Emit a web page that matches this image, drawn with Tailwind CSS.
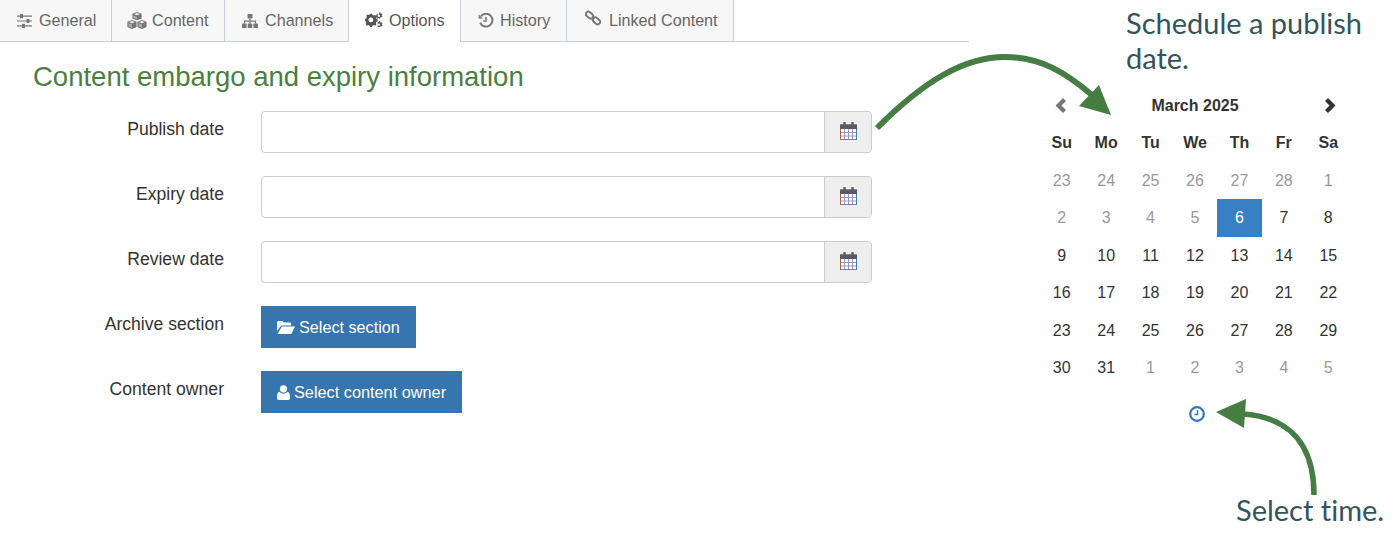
<!DOCTYPE html>
<html lang="en">
<head>
<meta charset="UTF-8">
<title>Content embargo and expiry information</title>
<script src="https://cdn.jsdelivr.net/npm/@tailwindcss/browser@4"></script>
</head>
<body class="bg-white font-['Liberation_Sans',sans-serif] text-[16px] text-[#333]">
<div class="relative flex w-[1400px] h-[550px] overflow-hidden">

  <!-- left: tabs and form -->
  <div class="w-[969px] shrink-0">
    <div class="flex h-[42px] border-b border-[#c5d0de] text-[16.15px] text-[#666]">
      <div class="flex items-center gap-[7px] w-[112px] pl-[17px] bg-[#f7f7f7] border-r border-[#c5d0de]">
        <svg class="w-[15px] h-[14px]" viewBox="0 0 15 14" fill="#777"><path d="M0 1.5h15v1.2H0zM0 6.4h15v1.2H0zM0 11.3h15v1.2H0z"/><rect x="3" y="0" width="3" height="4.2" rx=".5"/><rect x="9.5" y="4.9" width="3" height="4.2" rx=".5"/><rect x="5" y="9.8" width="3" height="4.2" rx=".5"/></svg>
        <span>General</span>
      </div>
      <div class="flex items-center gap-[5px] w-[113px] pl-[15px] bg-[#f7f7f7] border-r border-[#c5d0de]">
        <svg class="w-[20px] h-[17px]" viewBox="0 0 20 17" fill="#777"><path d="M10 0l4.6 1.8v4.6L10 8.2 5.4 6.4V1.8z"/><path d="M5 8l4.6 1.8v5.2L5 17 .4 15V9.8z"/><path d="M15 8l4.6 1.8v5.2L15 17l-4.6-2V9.8z"/><path d="M10 1l3 1.1-3 1.2-3-1.2zM5 9l3 1.1-3 1.2-3-1.2zM15 9l3 1.1-3 1.2-3-1.2z" fill="#f7f7f7"/><path d="M6.4 3.6L10 5v2.3L6.4 6zM1.4 11.1L5 12.5v3.2l-3.6-1.4zM11.4 11.1l3.6 1.4v3.2l-3.6-1.4z" fill="#aaa"/></svg>
        <span>Content</span>
      </div>
      <div class="flex items-center gap-[7px] w-[124px] pl-[17px] bg-[#f7f7f7] border-r border-[#c5d0de]">
        <svg class="w-[16px] h-[14px]" viewBox="0 0 16 14" fill="#777"><rect x="5.5" y="0" width="5" height="4.5" rx=".5"/><rect x="0" y="9.5" width="4.6" height="4.5" rx=".5"/><rect x="5.7" y="9.5" width="4.6" height="4.5" rx=".5"/><rect x="11.4" y="9.5" width="4.6" height="4.5" rx=".5"/><path d="M7.4 4.5h1.2v2h5.5v3h-1.2V7.7H8.6v1.8H7.4V7.7H3.1v1.8H1.9v-3h5.5z"/></svg>
        <span>Channels</span>
      </div>
      <div class="flex items-start gap-[6px] w-[112px] h-[42px] pl-[16px] pt-[8px] bg-white border-r border-[#c5d0de] text-[#555]">
        <svg class="w-[18px] h-[15px] mt-[4px]" viewBox="0 0 18 15" fill="#555"><path fill-rule="evenodd" d="M5.2 2.6l1.7-.5.6 1.3 1.4.6 1.3-.6 1.2 1.3-.6 1.3.6 1.4 1.3.5v1.8l-1.3.5-.6 1.4.6 1.3-1.2 1.3-1.3-.6-1.4.6-.6 1.3-1.7-.0-.6-1.3-1.4-.6-1.3.6L.7 12.5l.6-1.3-.6-1.4L0 9.3V7.5l1.3-.5.6-1.4-.6-1.3 1.2-1.3 1.3.6zM5.9 6a2.4 2.4 0 100 4.8 2.4 2.4 0 000-4.8z" transform="translate(0 -.5)"/><path fill-rule="evenodd" d="M14.5 0l.8.3v1l.8.5.9-.4.6.8-.7.7v.9l.7.7-.6.8-.9-.4-.8.5v1l-.8.3-.6-.8h-.9l-.6.8-.8-.3v-1l-.8-.5-.4-.1V4.1l.4-.3.8-.5v-1l.8-.3.6.8h.9zM13.9 2.6a1.2 1.2 0 100 2.4 1.2 1.2 0 000-2.4z"/><path fill-rule="evenodd" d="M14.5 9l.8.3v1l.8.5.9-.4.6.8-.7.7v.9l.7.7-.6.8-.9-.4-.8.5v1l-.8.3-.6-.8h-.9l-.6-.8.4-1.5-.4-1.5.6-1.2h.9zM13.9 11.4a1.2 1.2 0 100 2.4 1.2 1.2 0 000-2.4z"/></svg>
        <span>Options</span>
      </div>
      <div class="flex items-center gap-[6px] w-[106px] pl-[17px] bg-[#f7f7f7] border-r border-[#c5d0de]">
        <svg class="w-[16px] h-[15px]" viewBox="0 0 16 15" fill="none" stroke="#777"><path d="M3 3.2A6.4 6.4 0 112.1 9.6" stroke-width="2"/><path d="M.6 1.2v4.4H5z" fill="#777" stroke="none"/><path d="M8 4v4H5.2" stroke-width="1.6"/></svg>
        <span>History</span>
      </div>
      <div class="flex items-center gap-[8px] w-[167px] pl-[18px] bg-[#f7f7f7] border-r border-[#c5d0de]">
        <svg class="w-[16px] h-[16px] mb-[5px]" viewBox="0 0 16 16" fill="none" stroke="#777" stroke-width="1.9"><rect x=".5" y="2.6" width="8" height="5" rx="2.5" transform="rotate(40 4.5 5.1)"/><rect x="7.5" y="8.4" width="8" height="5" rx="2.5" transform="rotate(40 11.5 10.9)"/></svg>
        <span>Linked Content</span>
      </div>
    </div>

    <h1 class="ml-[33px] mt-[17px] mb-[16px] text-[27.5px] leading-[36px] text-[#4a7f3f]">Content embargo and expiry information</h1>

    <div class="flex flex-col gap-[23px] text-[17.6px]">
      <div class="flex h-[42px]">
        <label class="w-[224px] pt-[5px] text-right">Publish date</label>
        <div class="flex ml-[37px] w-[611px] h-[42px] border border-[#ccc] rounded-[4px]">
          <div class="flex-1"></div>
          <div class="flex items-center justify-center w-[47px] pb-[2px] bg-[#eee] border-l border-[#ccc] rounded-r-[4px]">
            <svg class="w-[17px] h-[18px]" viewBox="0 0 17 18"><rect x=".5" y="3" width="16" height="14.5" fill="#fff" stroke="#7a7ab0"/><path d="M.5 3v14.5" stroke="#a8683f"/><path d="M16.5 3v14.5" stroke="#3f7ab0"/><rect x="0" y="2.5" width="17" height="4.5" fill="#5a5a64"/><path d="M4.5 0.8v3.5M12.5 0.8v3.5" stroke="#5a5a64" stroke-width="2.4" stroke-linecap="round"/><path d="M4.5 7v10M8.5 7v10M12.5 7v10M1 10.5h15M1 14h15" stroke="#9a98c8"/></svg>
          </div>
        </div>
      </div>
      <div class="flex h-[42px]">
        <label class="w-[224px] pt-[5px] text-right">Expiry date</label>
        <div class="flex ml-[37px] w-[611px] h-[42px] border border-[#ccc] rounded-[4px]">
          <div class="flex-1"></div>
          <div class="flex items-center justify-center w-[47px] pb-[2px] bg-[#eee] border-l border-[#ccc] rounded-r-[4px]">
            <svg class="w-[17px] h-[18px]" viewBox="0 0 17 18"><rect x=".5" y="3" width="16" height="14.5" fill="#fff" stroke="#7a7ab0"/><path d="M.5 3v14.5" stroke="#a8683f"/><path d="M16.5 3v14.5" stroke="#3f7ab0"/><rect x="0" y="2.5" width="17" height="4.5" fill="#5a5a64"/><path d="M4.5 0.8v3.5M12.5 0.8v3.5" stroke="#5a5a64" stroke-width="2.4" stroke-linecap="round"/><path d="M4.5 7v10M8.5 7v10M12.5 7v10M1 10.5h15M1 14h15" stroke="#9a98c8"/></svg>
          </div>
        </div>
      </div>
      <div class="flex h-[42px]">
        <label class="w-[224px] pt-[5px] text-right">Review date</label>
        <div class="flex ml-[37px] w-[611px] h-[42px] border border-[#ccc] rounded-[4px]">
          <div class="flex-1"></div>
          <div class="flex items-center justify-center w-[47px] pb-[2px] bg-[#eee] border-l border-[#ccc] rounded-r-[4px]">
            <svg class="w-[17px] h-[18px]" viewBox="0 0 17 18"><rect x=".5" y="3" width="16" height="14.5" fill="#fff" stroke="#7a7ab0"/><path d="M.5 3v14.5" stroke="#a8683f"/><path d="M16.5 3v14.5" stroke="#3f7ab0"/><rect x="0" y="2.5" width="17" height="4.5" fill="#5a5a64"/><path d="M4.5 0.8v3.5M12.5 0.8v3.5" stroke="#5a5a64" stroke-width="2.4" stroke-linecap="round"/><path d="M4.5 7v10M8.5 7v10M12.5 7v10M1 10.5h15M1 14h15" stroke="#9a98c8"/></svg>
          </div>
        </div>
      </div>
      <div class="flex h-[42px]">
        <label class="w-[224px] pt-[5px] text-right">Archive section</label>
        <div class="flex items-center gap-[4px] ml-[37px] w-[155px] h-[42px] pl-[16px] bg-[#3675ad] text-[16.2px] text-white">
          <svg class="w-[18px] h-[13px]" viewBox="0 0 18 13" fill="#fff"><path d="M0 1.5C0 .7.6 0 1.4 0h4l1.4 1.5h6c.8 0 1.4.6 1.4 1.4V4.5H4.2L0 10z"/><path d="M4.8 5.5H18l-3.6 7.5H.6z"/></svg>
          <span>Select section</span>
        </div>
      </div>
      <div class="flex h-[42px]">
        <label class="w-[224px] pt-[5px] text-right">Content owner</label>
        <div class="flex items-center gap-[4px] ml-[37px] w-[201px] h-[42px] pl-[16px] bg-[#3675ad] text-[16.3px] text-white">
          <svg class="w-[13px] h-[15px]" viewBox="0 0 13 15" fill="#fff"><circle cx="6.5" cy="3.8" r="3.6"/><path d="M2.5 6.8c1 1.2 2.4 1.8 4 1.8s3-.6 4-1.8c1.6.3 2.5 2 2.5 4.8V13c0 1.2-.8 2-2 2H2c-1.2 0-2-.8-2-2v-1.4c0-2.8.9-4.5 2.5-4.8z"/></svg>
          <span>Select content owner</span>
        </div>
      </div>
    </div>
  </div>

  <!-- right: hint text and date picker -->
  <div class="flex-1">
    <p class="ml-[157px] mt-[5px] w-[260px] font-['Lato',sans-serif] text-[29px] leading-[35px] text-[#34545c] [font-variant-ligatures:none]">Schedule a publish date.</p>
    <div class="ml-[70.5px] mt-[11.5px] w-[311px] grid grid-cols-7 text-center leading-[37.5px]">
      <div class="flex items-center justify-center pr-[1px]">
        <svg class="w-[12px] h-[15px]" viewBox="0 0 12 15" fill="#777"><path d="M8 0l3 3-4.5 4.5L11 12l-3 3-7.5-7.5z"/></svg>
      </div>
      <div class="col-span-5 font-bold">March 2025</div>
      <div class="flex items-center justify-center pl-[3px]">
        <svg class="w-[12px] h-[15px]" viewBox="0 0 12 15" fill="#333"><path d="M4 0L1 3l4.5 4.5L1 12l3 3 7.5-7.5z"/></svg>
      </div>

      <div class="font-bold">Su</div><div class="font-bold">Mo</div><div class="font-bold">Tu</div><div class="font-bold">We</div><div class="font-bold">Th</div><div class="font-bold">Fr</div><div class="font-bold">Sa</div>

      <div class="text-[#999]">23</div><div class="text-[#999]">24</div><div class="text-[#999]">25</div><div class="text-[#999]">26</div><div class="text-[#999]">27</div><div class="text-[#999]">28</div><div class="text-[#999]">1</div>
      <div class="text-[#999]">2</div><div class="text-[#999]">3</div><div class="text-[#999]">4</div><div class="text-[#999]">5</div><div class="bg-[#3880c4] text-white">6</div><div>7</div><div>8</div>
      <div>9</div><div>10</div><div>11</div><div>12</div><div>13</div><div>14</div><div>15</div>
      <div>16</div><div>17</div><div>18</div><div>19</div><div>20</div><div>21</div><div>22</div>
      <div>23</div><div>24</div><div>25</div><div>26</div><div>27</div><div>28</div><div>29</div>
      <div>30</div><div>31</div><div class="text-[#999]">1</div><div class="text-[#999]">2</div><div class="text-[#999]">3</div><div class="text-[#999]">4</div><div class="text-[#999]">5</div>
    </div>
    <div class="flex justify-center ml-[71px] w-[311px] pl-[3px] mt-[19px]">
      <svg class="w-[16px] h-[16px]" viewBox="0 0 16 16" fill="none" stroke="#2f78bd"><circle cx="8" cy="8" r="6.8" stroke-width="2.2"/><path d="M8.5 4v4.5H5.5" stroke-width="1.4"/></svg>
    </div>
    <p class="ml-[267px] mt-[70px] font-['Lato',sans-serif] text-[29px] leading-[36px] text-[#34545c] [font-variant-ligatures:none]">Select time.</p>
  </div>

  <!-- annotation arrows over the page -->
  <svg class="absolute left-0 top-0 pointer-events-none" width="1400" height="550" viewBox="0 0 1400 550" fill="none">
    <path d="M877 128C925 80 965 57 1005 57C1040 57 1065 72 1092 95" stroke="#457d43" stroke-width="6"/>
    <path d="M1099 85L1079 106L1111 115z" fill="#457d43"/>
    <path d="M1314 495C1314 445 1290 417 1243 414" stroke="#457d43" stroke-width="5.5"/>
    <path d="M1216 412L1246 399L1244 428z" fill="#457d43"/>
  </svg>
</div>
</body>
</html>
